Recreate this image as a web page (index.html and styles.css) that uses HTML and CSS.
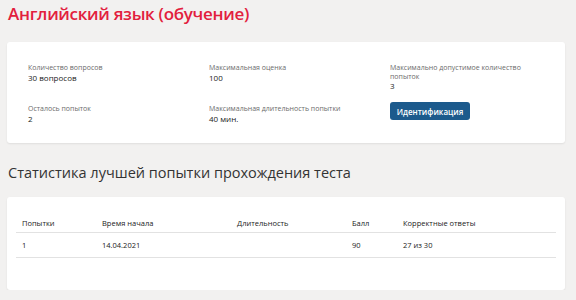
FILE: index.html
```html
<!DOCTYPE html>
<html lang="ru">
<head>
  <meta charset="UTF-8" />
  <title>Английский язык (обучение)</title>
  <link rel="stylesheet" href="styles.css">
</head>
<body>
  <h1 class="page-title">Английский язык (обучение)</h1>

  <!-- Информация о тесте -->
  <div class="card info-card">
    <div class="info-grid">
      <div class="info-item">
        <div class="info-label">Количество вопросов</div>
        <div class="info-value">30 вопросов</div>
      </div>
      <div class="info-item">
        <div class="info-label">Максимальная оценка</div>
        <div class="info-value">100</div>
      </div>
      <div class="info-item">
        <div class="info-label">Максимально допустимое количество<br>попыток</div>
        <div class="info-value">3</div>
      </div>
      <div class="info-item">
        <div class="info-label">Осталось попыток</div>
        <div class="info-value">2</div>
      </div>
      <div class="info-item">
        <div class="info-label">Максимальная длительность попытки</div>
        <div class="info-value">40 мин.</div>
      </div>
      <div class="info-item">
        <button class="btn-ident">Идентификация</button>
      </div>
    </div>
  </div>

  <h2 class="section-title">Статистика лучшей попытки прохождения теста</h2>

  <!-- Статистика -->
  <div class="card stats-card">
    <table class="stats-table">
      <thead>
        <tr>
          <th class="col-try">Попытки</th>
          <th class="col-start">Время начала</th>
          <th class="col-dur">Длительность</th>
          <th class="col-score">Балл</th>
          <th>Корректные ответы</th>
        </tr>
      </thead>
      <tbody>
        <tr>
          <td>1</td>
          <td>14.04.2021</td>
          <td></td>
          <td>90</td>
          <td>27 из 30</td>
        </tr>
      </tbody>
    </table>
  </div>
</body>
</html>
```

FILE: styles.css
```css
:root {
  --bg: #f2f1f0;
  --red: #e2203d;
  --blue: #1c5a8c;
  --text: #222;
  --muted: #6b6b6b;
}

body {
  margin: 0;
  padding: 0 11px 0 7px;
  background: var(--bg);
  color: var(--text);
  font-family: "Open Sans", "DejaVu Sans", sans-serif;
}

.page-title {
  margin: 0;
  padding: 1px 0 0 1px;
  font-size: 17px;
  line-height: 25px;
  font-weight: 600;
  letter-spacing: -0.3px;
  color: var(--red);
}

.card {
  background: #fff;
  border-radius: 3px;
  box-shadow: 0 1px 2px rgba(0, 0, 0, 0.08);
}

.info-card {
  margin-top: 16px;
  height: 101px;
  box-sizing: border-box;
  padding: 22px 0 0 21px;
}

.info-grid {
  display: grid;
  grid-template-columns: 181px 181px 181px;
  row-gap: 15px;
}

.info-label {
  font-size: 7px;
  line-height: 8.5px;
  color: var(--muted);
}

.info-value {
  font-size: 8px;
  line-height: 9px;
  font-weight: 500;
  color: var(--text);
}

.btn-ident {
  display: block;
  margin-top: -3px;
  width: 80px;
  height: 18px;
  padding: 0;
  border: none;
  border-radius: 3px;
  background: var(--blue);
  color: #fff;
  font-family: inherit;
  font-size: 8px;
  font-weight: 600;
}

.section-title {
  margin: 0;
  padding: 19px 0 0 1px;
  height: 35px;
  font-size: 14.5px;
  line-height: 22px;
  font-weight: 400;
  color: #333;
}

.stats-card {
  height: 93px;
  box-sizing: border-box;
  padding: 16px 9px 0 9px;
}

.stats-table {
  width: 100%;
  border-collapse: collapse;
  font-size: 7.5px;
  color: var(--text);
}

.stats-table th,
.stats-table td {
  text-align: left;
  font-weight: 400;
  padding: 0 6px;
  border-bottom: 1px solid #e2e2e2;
}

.stats-table th {
  height: 19px;
  vertical-align: middle;
}

.stats-table td {
  height: 24px;
}

.col-try { width: 68px; }
.col-start { width: 123px; }
.col-dur { width: 103px; }
.col-score { width: 39px; }
```
